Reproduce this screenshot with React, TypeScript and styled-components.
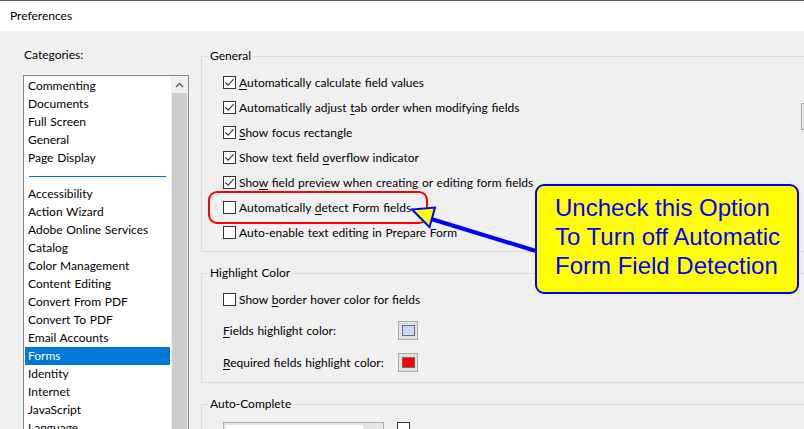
import React from "react";
import styled, { createGlobalStyle } from "styled-components";

const GlobalStyle = createGlobalStyle`
  html, body {
    margin: 0;
    padding: 0;
    background: #f0f0f0;
  }
`;

const categoriesTop = [
  "Commenting",
  "Documents",
  "Full Screen",
  "General",
  "Page Display",
];

const categoriesBottom = [
  "Accessibility",
  "Action Wizard",
  "Adobe Online Services",
  "Catalog",
  "Color Management",
  "Content Editing",
  "Convert From PDF",
  "Convert To PDF",
  "Email Accounts",
  "Forms",
  "Identity",
  "Internet",
  "JavaScript",
  "Language",
];

function CheckBox({ checked }: { checked?: boolean }) {
  return (
    <StyledCheckBox>
      {checked && (
        <svg width="11" height="11" viewBox="0 0 11 11">
          <path d="M1.5 5.5 L4.2 8.2 L9.6 2.2" fill="none" stroke="#333" strokeWidth="1.1" />
        </svg>
      )}
    </StyledCheckBox>
  );
}

function CheckRow({ checked, children }: { checked?: boolean; children: React.ReactNode }) {
  return (
    <Row>
      <CheckBox checked={checked} />
      <span>{children}</span>
    </Row>
  );
}

export default function App() {
  return (
    <>
      <GlobalStyle />
      <Window>
        <TitleBar>Preferences</TitleBar>
        <Body>
          <LeftColumn>
            <SideLabel>Categories:</SideLabel>
            <ListBox>
              <ListItems>
                {categoriesTop.map((c) => (
                  <ListItem key={c}>{c}</ListItem>
                ))}
                <Separator />
                {categoriesBottom.map((c) => (
                  <ListItem key={c} $selected={c === "Forms"}>
                    {c}
                  </ListItem>
                ))}
              </ListItems>
              <ScrollBar>
                <ScrollArrow>
                  <svg width="9" height="6" viewBox="0 0 9 6">
                    <path d="M1 5 L4.5 1.5 L8 5" fill="none" stroke="#606060" strokeWidth="1.4" />
                  </svg>
                </ScrollArrow>
                <Thumb />
              </ScrollBar>
            </ListBox>
          </LeftColumn>

          <RightColumn>
            <Group $bottom={6}>
              <Legend>General</Legend>
              <GroupRows>
                <CheckRow checked>
                  <u>A</u>utomatically calculate field values
                </CheckRow>
                <CheckRow checked>
                  Automatically adjust <u>t</u>ab order when modifying fields
                </CheckRow>
                <CheckRow checked>
                  <u>S</u>how focus rectangle
                </CheckRow>
                <CheckRow checked>
                  Show text field <u>o</u>verflow indicator
                </CheckRow>
                <CheckRow checked>
                  Sho<u>w</u> field preview when creating or editing form fields
                </CheckRow>
                <CheckRow>
                  Automatically <u>d</u>etect Form fields
                </CheckRow>
                <CheckRow>Auto-enable text editing in Prepare Form</CheckRow>
              </GroupRows>
            </Group>

            <Group $gap>
              <Legend>Highlight Color</Legend>
              <GroupRows>
                <CheckRow>
                  Show <u>b</u>order hover color for fields
                </CheckRow>
                <ColorRow>
                  <span>
                    <u>F</u>ields highlight color:
                  </span>
                  <Swatch $color="#c9d8fa" />
                </ColorRow>
                <ColorRow>
                  <span>
                    <u>R</u>equired fields highlight color:
                  </span>
                  <Swatch $color="#ff0000" />
                </ColorRow>
              </GroupRows>
            </Group>

            <Group $gap>
              <Legend>Auto-Complete</Legend>
              <AutoRow>
                <Dropdown>
                  <DropField />
                  <DropButton />
                </Dropdown>
                <StyledCheckBox />
              </AutoRow>
            </Group>
            <EdgeScroll />
          </RightColumn>
        </Body>

        <RedOutline />
        <ArrowLayer width="804" height="429" viewBox="0 0 804 429">
          <line x1="536" y1="251" x2="428" y2="218" stroke="#0000ff" strokeWidth="4" />
          <polygon
            points="412,209.5 435,207.5 429.5,227"
            fill="#ffff00"
            stroke="#0000ff"
            strokeWidth="2"
          />
        </ArrowLayer>
        <Callout>
          Uncheck this Option
          <br />
          To Turn off Automatic
          <br />
          Form Field Detection
        </Callout>
      </Window>
    </>
  );
}

const Window = styled.div`
  position: relative;
  width: 804px;
  height: 429px;
  overflow: hidden;
  background: #f0f0f0;
  font-family: Lato, "Noto Sans", sans-serif;
  font-size: 12px;
  word-spacing: 0.6px;
  color: #000;

  & u {
    text-decoration-thickness: 1px;
    text-underline-offset: 2px;
  }
`;

const TitleBar = styled.div`
  box-sizing: border-box;
  height: 31px;
  display: flex;
  align-items: center;
  padding-left: 10px;
  padding-bottom: 1px;
  background: #fff;
  border-top: 1px solid #5c5c5c;
  font-size: 12px;
`;

const Body = styled.div`
  display: flex;
  gap: 12px;
  padding-left: 23px;
  height: 398px;
`;

const LeftColumn = styled.div`
  flex: none;
  width: 166px;
  display: flex;
  flex-direction: column;
  padding-top: 16px;
`;

const SideLabel = styled.div`
  line-height: 16px;
  padding-left: 1px;
  margin-bottom: 12px;
`;

const ListBox = styled.div`
  flex: 1;
  display: flex;
  background: #fff;
  border: 1px solid #828790;
  border-bottom: none;
`;

const ListItems = styled.div`
  flex: 1;
  padding: 1px 1px 0;
`;

const ListItem = styled.div<{ $selected?: boolean }>`
  height: 18px;
  line-height: 18px;
  padding-left: 3px;
  white-space: nowrap;
  background: ${(p) => (p.$selected ? "#0078d7" : "transparent")};
  color: ${(p) => (p.$selected ? "#fff" : "#000")};
`;

const Separator = styled.div`
  height: 18px;
  display: flex;
  align-items: center;
  padding: 0 4px;

  &::after {
    content: "";
    flex: 1;
    height: 1px;
    background: #0078d7;
  }
`;

const ScrollBar = styled.div`
  width: 17px;
  display: flex;
  flex-direction: column;
  background: #f0f0f0;
`;

const ScrollArrow = styled.div`
  height: 17px;
  display: flex;
  align-items: center;
  justify-content: center;
`;

const Thumb = styled.div`
  flex: 1;
  margin: 0 1px;
  background: #cdcdcd;
`;

const RightColumn = styled.div`
  position: relative;
  flex: 1;
  min-width: 0;
  padding-top: 17px;
`;

const Group = styled.fieldset<{ $gap?: boolean; $bottom?: number }>`
  width: 640px;
  margin: ${(p) => (p.$gap ? "13px" : "0")} 0 0;
  padding: 0 0 ${(p) => p.$bottom ?? 4}px 6px;
  border: 1px solid #dcdcdc;
  min-inline-size: 0;
`;

const Legend = styled.legend`
  padding: 0 2px;
  line-height: 16px;
`;

const GroupRows = styled.div`
  display: flex;
  flex-direction: column;
  padding: 6px 0 0 15px;
`;

const Row = styled.div`
  height: 25px;
  display: flex;
  align-items: center;
  gap: 3px;
  white-space: nowrap;
`;

const StyledCheckBox = styled.div`
  box-sizing: border-box;
  width: 13px;
  height: 13px;
  flex: none;
  display: flex;
  align-items: center;
  justify-content: center;
  background: #fff;
  border: 1px solid #333;
`;

const ColorRow = styled.div`
  height: 32px;
  display: grid;
  grid-template-columns: 175px auto;
  align-items: center;
  white-space: nowrap;

  &:nth-child(2) {
    margin-top: 2px;
  }
`;

const Swatch = styled.div<{ $color: string }>`
  box-sizing: border-box;
  width: 20px;
  height: 19px;
  display: flex;
  align-items: center;
  justify-content: center;
  background: #e1e1e1;
  border: 1px solid #adadad;

  &::after {
    content: "";
    box-sizing: border-box;
    width: 13px;
    height: 11px;
    background: ${(p) => p.$color};
    border: 1px solid #707070;
  }
`;

const AutoRow = styled.div`
  display: flex;
  align-items: flex-start;
  gap: 13px;
  padding: 10px 0 0 15px;
`;

const Dropdown = styled.div`
  width: 161px;
  height: 22px;
  display: flex;
  box-sizing: border-box;
  border: 1px solid #acacac;
  background: #e5e5e5;
`;

const DropField = styled.div`
  flex: 1;
  margin: 2px 0 0 2px;
  background: #fff;
`;

const DropButton = styled.div`
  width: 20px;
`;

const EdgeScroll = styled.div`
  position: absolute;
  top: 72px;
  right: 0;
  width: 2px;
  height: 25px;
  border: 1px solid #ababab;
  border-right: none;
  background: #e6e6e6;
`;

const RedOutline = styled.div`
  position: absolute;
  left: 208px;
  top: 191px;
  width: 220px;
  height: 33px;
  box-sizing: border-box;
  border: 2px solid #ff0000;
  border-radius: 9px;
`;

const ArrowLayer = styled.svg`
  position: absolute;
  left: 0;
  top: 0;
  pointer-events: none;
`;

const Callout = styled.div`
  position: absolute;
  left: 535px;
  top: 184px;
  width: 264px;
  height: 110px;
  box-sizing: border-box;
  padding: 7px 0 0 18px;
  background: #ffff00;
  border: 2px solid #0000ff;
  border-radius: 9px;
  font-family: "Liberation Sans", Arial, sans-serif;
  font-size: 24px;
  line-height: 29px;
  word-spacing: 0;
  color: #0000ff;
  white-space: nowrap;
`;
